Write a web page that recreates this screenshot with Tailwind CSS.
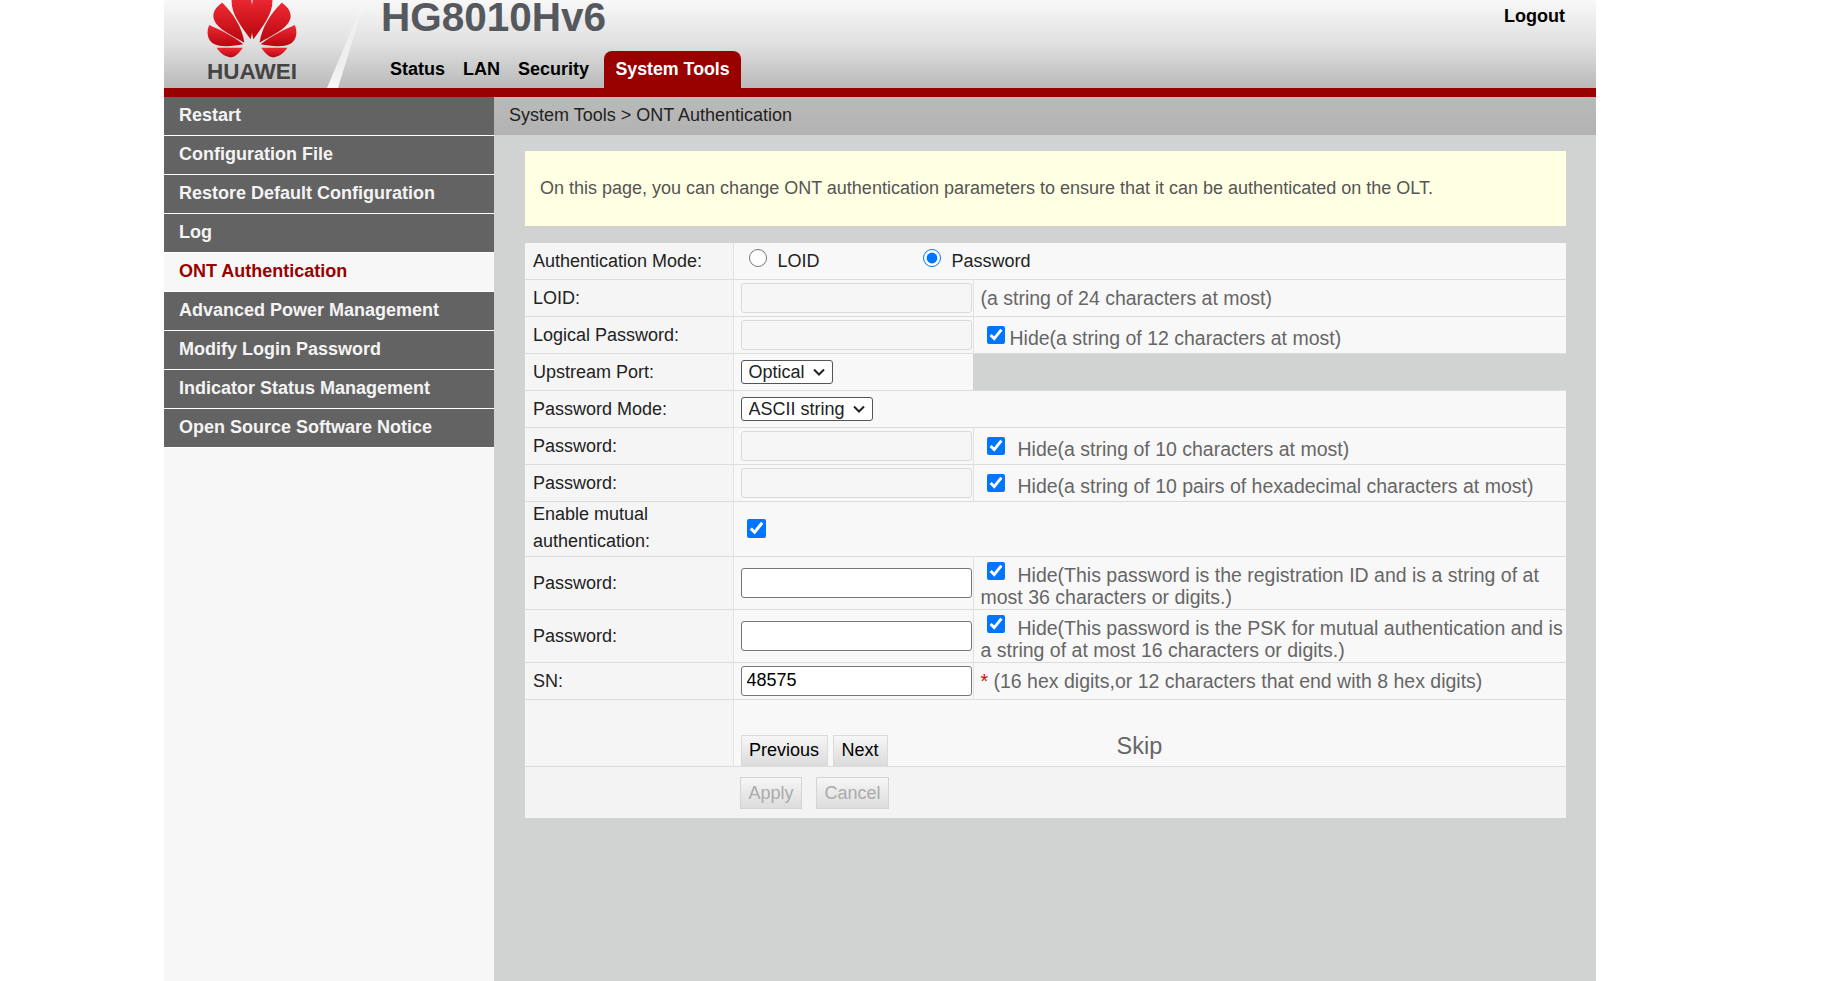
<!DOCTYPE html>
<html lang="en">
<head>
    <meta charset="UTF-8">
    <title>HG8010Hv6</title>
    <script src="https://cdn.jsdelivr.net/npm/@tailwindcss/browser@4"></script>
</head>
<body class="bg-white font-['Liberation_Sans',Arial,sans-serif] overflow-hidden">
<div class="ml-[164px] w-[1432px] h-[981px] flex flex-col">

    <!-- Header -->
    <header class="relative h-[88px] flex bg-gradient-to-b from-[#f8f8f8] via-[#e0e0e0] to-[#b9b9b9]">
        <svg class="absolute left-[160px] top-0" width="50" height="88" viewBox="0 0 50 88" aria-hidden="true">
            <defs>
                <linearGradient id="stripe" x1="0" y1="0" x2="0" y2="1">
                    <stop offset="0" stop-color="#ffffff" stop-opacity="0.05"/>
                    <stop offset="1" stop-color="#ffffff" stop-opacity="0.9"/>
                </linearGradient>
            </defs>
            <path d="M40 0 L41 0 L14 88 L3 88 Z" fill="url(#stripe)"/>
        </svg>
        <div class="relative w-[176px] flex flex-col items-center">
            <svg width="150" height="60" viewBox="0 0 450 180" class="shrink-0 self-start ml-[26px]" aria-hidden="true">
                <defs>
                    <linearGradient id="petal" x1="0" y1="0" x2="0" y2="1">
                        <stop offset="0" stop-color="#ee2a33"/>
                        <stop offset="1" stop-color="#b8060f"/>
                    </linearGradient>
                </defs>
                <g fill="url(#petal)">
                    <path d="M182 118 C150 75 118 35 126 -10 L182 -10 C190 30 192 80 182 118 Z"/>
                    <path d="M163 128 C125 105 72 85 70 48 C70 30 85 15 97 8 C130 40 158 85 163 128 Z"/>
                    <path d="M160 133 C125 105 90 90 58 75 C48 95 52 122 72 132 C92 142 130 139 160 133 Z"/>
                    <path d="M158 143 L80 143 C88 158 108 172 125 172 C140 168 150 155 158 143 Z"/>
                </g>
                <g fill="url(#petal)" transform="matrix(-1 0 0 1 372 0)">
                    <path d="M182 118 C150 75 118 35 126 -10 L182 -10 C190 30 192 80 182 118 Z"/>
                    <path d="M163 128 C125 105 72 85 70 48 C70 30 85 15 97 8 C130 40 158 85 163 128 Z"/>
                    <path d="M160 133 C125 105 90 90 58 75 C48 95 52 122 72 132 C92 142 130 139 160 133 Z"/>
                    <path d="M158 143 L80 143 C88 158 108 172 125 172 C140 168 150 155 158 143 Z"/>
                </g>
            </svg>
            <div class="text-[22.5px] leading-[24px] font-bold text-[#444]">HUAWEI</div>
        </div>
        <div class="relative ml-[41px] flex-1 flex flex-col">
            <div class="h-[51px] text-[40.5px] leading-[34px] font-bold text-[#55595e]">HG8010Hv6</div>
            <nav class="h-[37px] flex items-stretch text-[18px] font-bold text-black pl-[9px]">
                <a class="flex items-center mr-[18px]">Status</a>
                <a class="flex items-center mr-[18px]">LAN</a>
                <a class="flex items-center mr-[15px]">Security</a>
                <a class="flex items-center justify-center w-[137px] text-[17.8px] bg-[#990000] text-white rounded-t-[8px]">System Tools</a>
            </nav>
        </div>
        <a class="relative pr-[31px] pt-[6px] text-[18px] leading-[20px] font-bold text-black">Logout</a>
    </header>
    <div class="h-[9px] bg-[#990000]"></div>

    <div class="flex flex-1 min-h-0">
        <!-- Side menu -->
        <aside class="w-[330px] bg-[#f7f7f7] text-[18px] font-bold text-[#f4f4f4]">
            <a class="flex items-center h-[39px] pl-[15px] pb-[2px] bg-[#636363] border-b border-white">Restart</a>
            <a class="flex items-center h-[39px] pl-[15px] pb-[2px] bg-[#636363] border-b border-white">Configuration File</a>
            <a class="flex items-center h-[39px] pl-[15px] pb-[2px] bg-[#636363] border-b border-white">Restore Default Configuration</a>
            <a class="flex items-center h-[39px] pl-[15px] pb-[2px] bg-[#636363] border-b border-white">Log</a>
            <a class="flex items-center h-[39px] pl-[15px] pb-[2px] bg-[#f7f7f7] text-[#990000] border-b border-white">ONT Authentication</a>
            <a class="flex items-center h-[39px] pl-[15px] pb-[2px] bg-[#636363] border-b border-white">Advanced Power Management</a>
            <a class="flex items-center h-[39px] pl-[15px] pb-[2px] bg-[#636363] border-b border-white">Modify Login Password</a>
            <a class="flex items-center h-[39px] pl-[15px] pb-[2px] bg-[#636363] border-b border-white">Indicator Status Management</a>
            <a class="flex items-center h-[39px] pl-[15px] pb-[2px] bg-[#636363] border-b border-white">Open Source Software Notice</a>
        </aside>

        <!-- Main content -->
        <main class="flex-1 bg-[#d1d2d2]">
            <div class="h-[38px] flex items-center pl-[15px] pb-[1px] text-[18px] text-[#222] bg-gradient-to-b from-[#bbbaba] to-[#b2b2b2]">System Tools &gt; ONT Authentication</div>
            <div class="pl-[31px] pr-[30px] pt-[16px]">
                <div class="h-[75px] flex items-center pl-[15px] bg-[#ffffe3] text-[18px] text-[#555]">On this page, you can change ONT authentication parameters to ensure that it can be authenticated on the OLT.</div>

                <table class="mt-[17px] w-full table-fixed border-collapse text-[18px] text-[#222]">
                    <colgroup>
                        <col class="w-[208px]">
                        <col class="w-[240px]">
                        <col>
                    </colgroup>
                    <tbody>
                        <tr class="h-[36px] border-b border-[#dcdcdc]">
                            <td class="pl-[8px] pt-[1px] bg-[#f5f5f5] border-r border-[#e2e2e2]">Authentication Mode:</td>
                            <td colspan="2" class="pt-[1px] bg-[#f8f8f8]">
                                <label class="inline-flex items-center w-[184px] pl-[15px]">
                                    <input type="radio" name="mode" class="w-[18px] h-[18px] mb-[7px] mr-[11px] accent-[#0075ff]"><span>LOID</span>
                                </label>
                                <label class="inline-flex items-center">
                                    <input type="radio" name="mode" checked class="w-[18px] h-[18px] mb-[7px] mr-[11px] accent-[#0075ff]"><span>Password</span>
                                </label>
                            </td>
                        </tr>
                        <tr class="h-[37px] border-b border-[#dcdcdc]">
                            <td class="pl-[8px] pt-[2px] bg-[#f5f5f5] border-r border-[#e2e2e2]">LOID:</td>
                            <td class="pl-[7px] bg-[#f8f8f8] border-r border-[#e2e2e2]"><input disabled class="block w-[231px] h-[30px] bg-[#f6f6f6] border border-[#d9d9d9] rounded-[3px]"></td>
                            <td class="pl-[7px] bg-[#f8f8f8] text-[19.5px] leading-[22px] text-[#666]">(a string of 24 characters at most)</td>
                        </tr>
                        <tr class="h-[37px] border-b border-[#dcdcdc]">
                            <td class="pl-[8px] pt-[2px] bg-[#f5f5f5] border-r border-[#e2e2e2]">Logical Password:</td>
                            <td class="pl-[7px] bg-[#f8f8f8] border-r border-[#e2e2e2]"><input disabled class="block w-[231px] h-[30px] bg-[#f6f6f6] border border-[#d9d9d9] rounded-[3px]"></td>
                            <td class="pl-[13px] pt-[6px] bg-[#f8f8f8] text-[19.5px] leading-[22px] text-[#666]"><input type="checkbox" checked class="w-[18px] h-[18px] mr-[5px] accent-[#0075ff] inline-block align-[1px]">Hide(a string of 12 characters at most)</td>
                        </tr>
                        <tr class="h-[37px] border-b border-[#dcdcdc]">
                            <td class="pl-[8px] pt-[2px] bg-[#f5f5f5] border-r border-[#e2e2e2]">Upstream Port:</td>
                            <td class="pl-[7px] bg-[#f8f8f8]">
                                <div class="relative w-[92px] h-[24px]">
                                    <select class="appearance-none block w-full h-full pl-[7px] leading-[20px] bg-white border border-[#555] rounded-[3px] text-[#222]"><option>Optical</option></select>
                                    <svg class="absolute right-[8px] top-[8px] pointer-events-none" width="12" height="8" viewBox="0 0 12 8" fill="none" stroke="#222" stroke-width="2" aria-hidden="true"><path d="M1 1.5 L6 6.5 L11 1.5"/></svg>
                                </div>
                            </td>
                            <td class="bg-[#d1d2d2]"></td>
                        </tr>
                        <tr class="h-[37px] border-b border-[#dcdcdc]">
                            <td class="pl-[8px] pt-[2px] bg-[#f5f5f5] border-r border-[#e2e2e2]">Password Mode:</td>
                            <td colspan="2" class="pl-[7px] bg-[#f8f8f8]">
                                <div class="relative w-[132px] h-[24px]">
                                    <select class="appearance-none block w-full h-full pl-[7px] leading-[20px] bg-white border border-[#555] rounded-[3px] text-[#222]"><option>ASCII string</option></select>
                                    <svg class="absolute right-[8px] top-[8px] pointer-events-none" width="12" height="8" viewBox="0 0 12 8" fill="none" stroke="#222" stroke-width="2" aria-hidden="true"><path d="M1 1.5 L6 6.5 L11 1.5"/></svg>
                                </div>
                            </td>
                        </tr>
                        <tr class="h-[37px] border-b border-[#dcdcdc]">
                            <td class="pl-[8px] pt-[2px] bg-[#f5f5f5] border-r border-[#e2e2e2]">Password:</td>
                            <td class="pl-[7px] bg-[#f8f8f8] border-r border-[#e2e2e2]"><input disabled class="block w-[231px] h-[30px] bg-[#f6f6f6] border border-[#d9d9d9] rounded-[3px]"></td>
                            <td class="pl-[13px] pt-[6px] bg-[#f8f8f8] text-[19.5px] leading-[22px] text-[#666]"><input type="checkbox" checked class="w-[18px] h-[18px] mr-[13px] accent-[#0075ff] inline-block align-[1px]">Hide(a string of 10 characters at most)</td>
                        </tr>
                        <tr class="h-[37px] border-b border-[#dcdcdc]">
                            <td class="pl-[8px] pt-[2px] bg-[#f5f5f5] border-r border-[#e2e2e2]">Password:</td>
                            <td class="pl-[7px] bg-[#f8f8f8] border-r border-[#e2e2e2]"><input disabled class="block w-[231px] h-[30px] bg-[#f6f6f6] border border-[#d9d9d9] rounded-[3px]"></td>
                            <td class="pl-[13px] pt-[6px] bg-[#f8f8f8] text-[19.5px] leading-[22px] text-[#666]"><input type="checkbox" checked class="w-[18px] h-[18px] mr-[13px] accent-[#0075ff] inline-block align-[1px]">Hide(a string of 10 pairs of hexadecimal characters at most)</td>
                        </tr>
                        <tr class="h-[55px] border-b border-[#dcdcdc]">
                            <td class="pl-[8px] pr-[40px] bg-[#f5f5f5] border-r border-[#e2e2e2] leading-[27px]"><div class="-mt-[2px]">Enable mutual authentication:</div></td>
                            <td colspan="2" class="pl-[13px] bg-[#f8f8f8]"><input type="checkbox" checked class="block w-[19px] h-[19px] accent-[#0075ff]"></td>
                        </tr>
                        <tr class="h-[53px] border-b border-[#dcdcdc]">
                            <td class="pl-[8px] pt-[2px] bg-[#f5f5f5] border-r border-[#e2e2e2]">Password:</td>
                            <td class="pl-[7px] bg-[#f8f8f8] border-r border-[#e2e2e2]"><input class="block w-[231px] h-[30px] bg-white border border-[#767676] rounded-[3px]"></td>
                            <td class="pl-[7px] pr-[2px] pt-[4px] bg-[#f8f8f8] text-[19.5px] leading-[22px] text-[#666]"><input type="checkbox" checked class="w-[18px] h-[18px] ml-[6px] mr-[13px] accent-[#0075ff] inline-block align-[2px]">Hide(This password is the registration ID and is a string of at most 36 characters or digits.)</td>
                        </tr>
                        <tr class="h-[53px] border-b border-[#dcdcdc]">
                            <td class="pl-[8px] pt-[2px] bg-[#f5f5f5] border-r border-[#e2e2e2]">Password:</td>
                            <td class="pl-[7px] bg-[#f8f8f8] border-r border-[#e2e2e2]"><input class="block w-[231px] h-[30px] bg-white border border-[#767676] rounded-[3px]"></td>
                            <td class="pl-[7px] pr-[2px] pt-[4px] bg-[#f8f8f8] text-[19.5px] leading-[22px] text-[#666]"><input type="checkbox" checked class="w-[18px] h-[18px] ml-[6px] mr-[13px] accent-[#0075ff] inline-block align-[2px]">Hide(This password is the PSK for mutual authentication and is a string of at most 16 characters or digits.)</td>
                        </tr>
                        <tr class="h-[37px] border-b border-[#dcdcdc]">
                            <td class="pl-[8px] pt-[2px] bg-[#f5f5f5] border-r border-[#e2e2e2]">SN:</td>
                            <td class="pl-[7px] bg-[#f8f8f8] border-r border-[#e2e2e2]"><input value="48575" class="block w-[231px] h-[30px] px-[5px] bg-white border border-[#767676] rounded-[3px] text-black"></td>
                            <td class="pl-[7px] bg-[#f8f8f8] text-[19.5px] leading-[22px] text-[#666]"><span class="text-[#e00000]">*</span> (16 hex digits,or 12 characters that end with 8 hex digits)</td>
                        </tr>
                        <tr class="h-[67px] border-b border-[#dcdcdc]">
                            <td class="bg-[#f5f5f5] border-r border-[#e2e2e2]"></td>
                            <td colspan="2" class="pl-[7px] bg-[#f8f8f8] align-bottom">
                                <div class="flex items-end">
                                    <button class="w-[87px] h-[31px] bg-gradient-to-b from-[#f6f6f6] to-[#dcdcdc] border border-[#dadada] text-black">Previous</button>
                                    <button class="ml-[5px] w-[55px] h-[31px] bg-gradient-to-b from-[#f6f6f6] to-[#dcdcdc] border border-[#dadada] text-black">Next</button>
                                    <span class="ml-[229px] mb-[6px] text-[23.5px] leading-[28px] text-[#666]">Skip</span>
                                </div>
                            </td>
                        </tr>
                        <tr class="h-[52px]">
                            <td class="bg-[#f3f3f3]"></td>
                            <td colspan="2" class="pl-[7px] pt-[2px] bg-[#f3f3f3]">
                                <div class="flex">
                                    <button disabled class="w-[62px] h-[32px] bg-gradient-to-b from-[#f6f6f6] to-[#dcdcdc] border border-[#d4d4d4] text-[#aaa]">Apply</button>
                                    <button disabled class="ml-[14px] w-[73px] h-[32px] bg-gradient-to-b from-[#f6f6f6] to-[#dcdcdc] border border-[#d4d4d4] text-[#aaa]">Cancel</button>
                                </div>
                            </td>
                        </tr>
                    </tbody>
                </table>
            </div>
        </main>
    </div>
</div>
</body>
</html>
